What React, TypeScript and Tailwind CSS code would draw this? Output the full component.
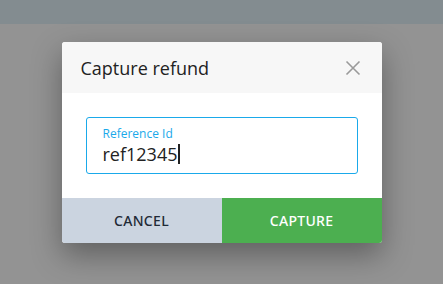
export default function App() {
  return (
    <div className="w-[443px] h-[284px] bg-[#939393] flex flex-col overflow-hidden font-['Open_Sans','Noto_Sans',sans-serif]">
      <div className="h-[24px] bg-[#838c90] shrink-0" />
      <div className="flex justify-center pt-[18px]">
        <div className="w-[320px] rounded-[3px] bg-white shadow-[0_12px_30px_rgba(0,0,0,0.35)] overflow-hidden">
          {/* Header */}
          <div className="h-[51px] bg-[#f7f7f7] flex items-center justify-between pl-[19px] pr-[21px]">
            <h2 className="text-[18px] text-[#222] leading-none">Capture refund</h2>
            <svg width="16" height="16" viewBox="0 0 16 16" className="text-[#9a9a9a]">
              <path d="M1.5 1.5 L14.5 14.5 M14.5 1.5 L1.5 14.5" stroke="currentColor" strokeWidth="1.6" fill="none" />
            </svg>
          </div>

          {/* Body */}
          <div className="px-[24px] pt-[24px] pb-[24px]">
            <div className="h-[57px] border border-[#1aa9ea] rounded-[3px] pl-[16px] pt-[8px]">
              <div className="text-[12px] leading-[16px] text-[#1aa9ea]">Reference Id</div>
              <div className="flex items-center text-[18px] leading-[24px] text-[#222]">
                ref12345
                <span className="inline-block w-[2px] h-[20px] bg-[#222] ml-[1px]" />
              </div>
            </div>
          </div>

          {/* Footer */}
          <div className="flex h-[45px] font-['Noto_Sans',sans-serif]">
            <button className="flex-1 bg-[#cbd4e0] text-[#1f2a36] text-[14px] font-medium tracking-[0.3px]">
              CANCEL
            </button>
            <button className="flex-1 bg-[#4caf50] text-white text-[14px] font-medium tracking-[0.3px]">
              CAPTURE
            </button>
          </div>
        </div>
      </div>
    </div>
  );
}
